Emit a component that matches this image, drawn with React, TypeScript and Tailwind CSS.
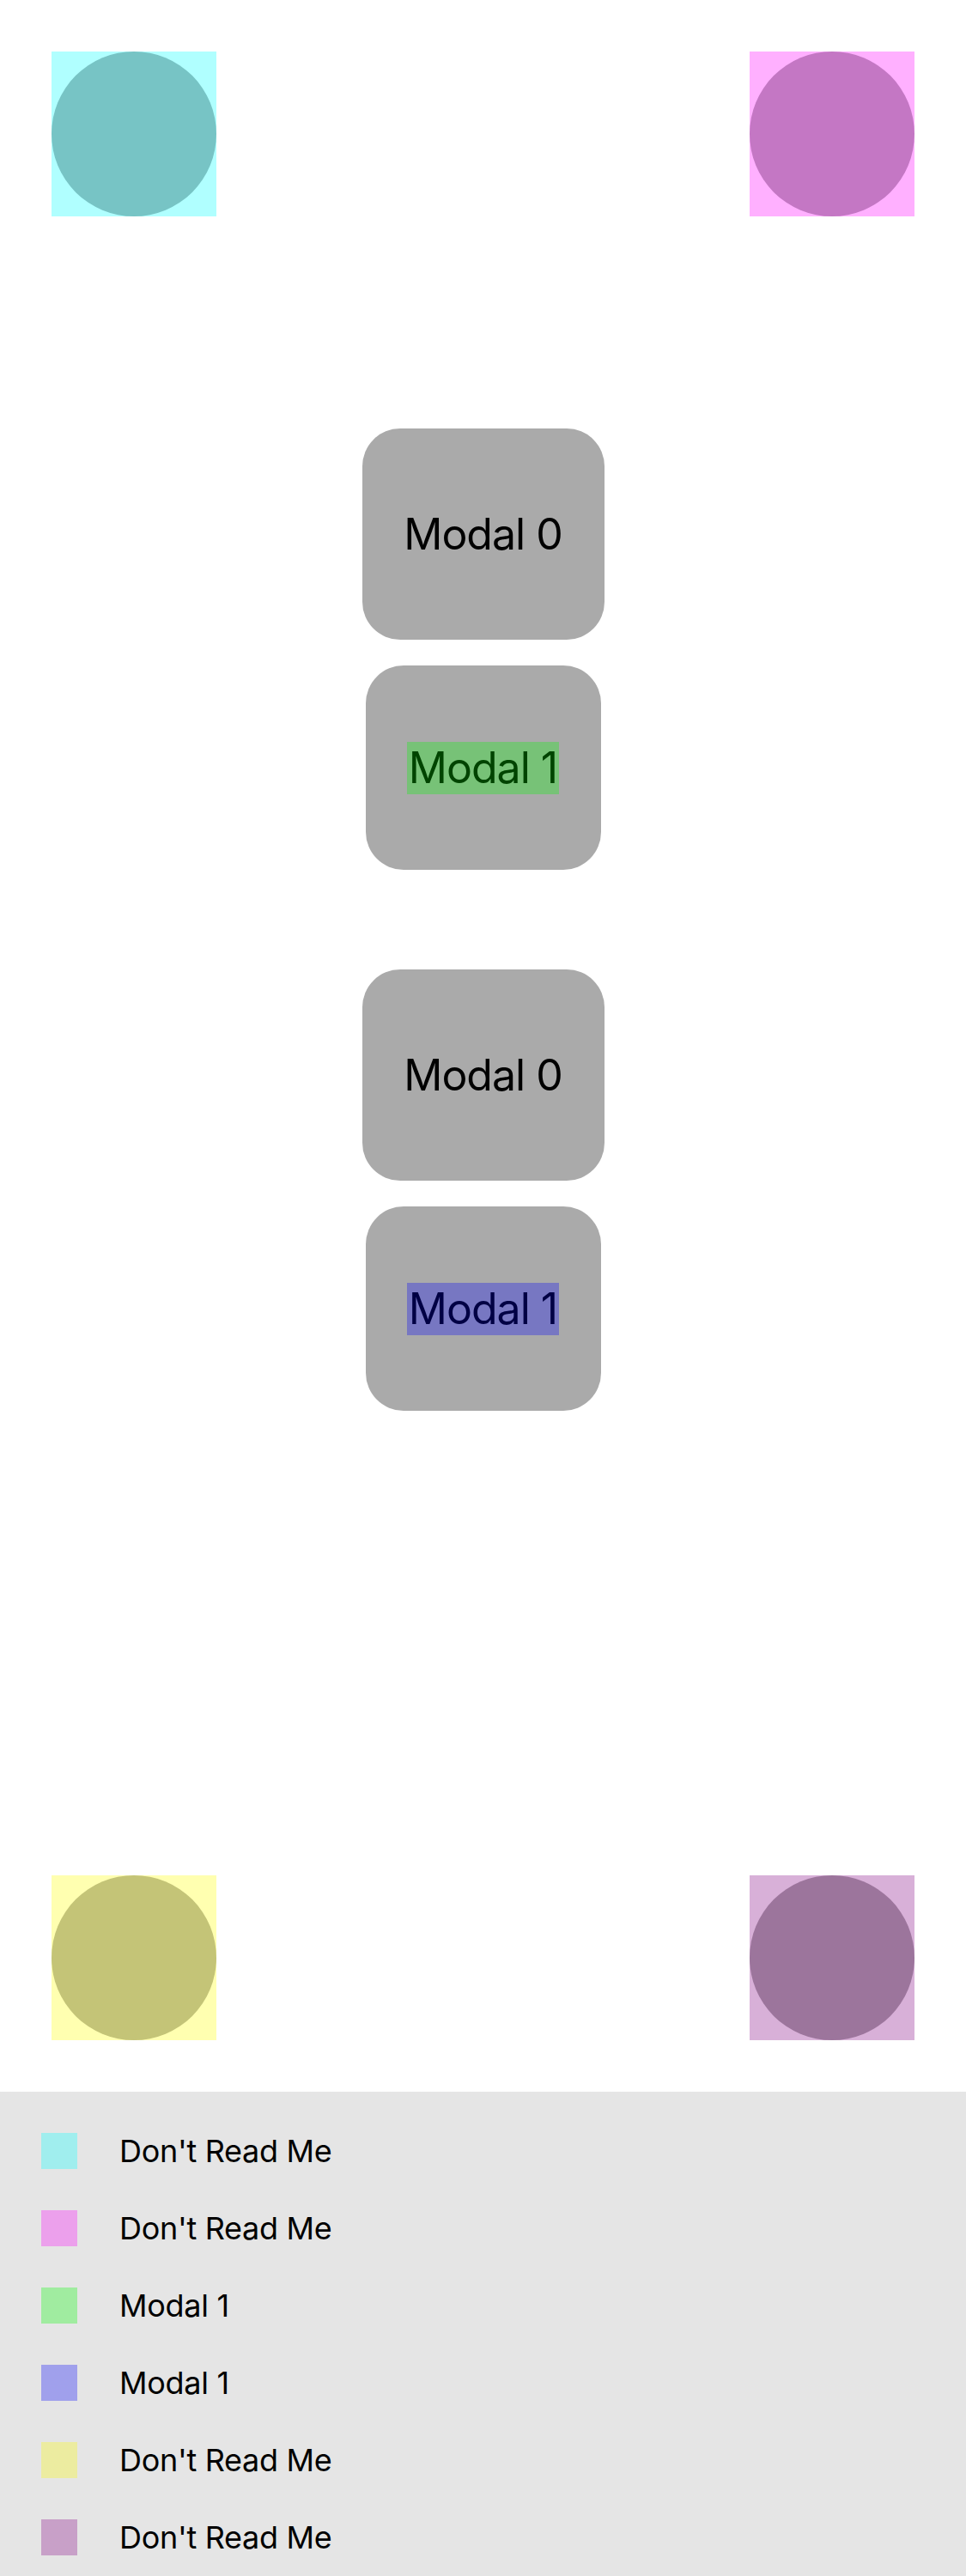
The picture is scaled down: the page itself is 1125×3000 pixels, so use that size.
import React from "react";

const legend = [
  { color: "bg-[#a0eeee]", label: "Don't Read Me" },
  { color: "bg-[#eca0ec]", label: "Don't Read Me" },
  { color: "bg-[#a0eca0]", label: "Modal 1" },
  { color: "bg-[#a0a0ec]", label: "Modal 1" },
  { color: "bg-[#ececa0]", label: "Don't Read Me" },
  { color: "bg-[#c8a0c8]", label: "Don't Read Me" },
];

function Corner({ sq, circ }: { sq: string; circ: string }) {
  return (
    <div className={`w-[192px] h-[192px] ${sq}`}>
      <div className={`w-full h-full rounded-full ${circ}`} />
    </div>
  );
}

function ModalPair({ hl }: { hl: string }) {
  return (
    <div className="flex flex-col items-center">
      <div className="w-[282px] h-[246px] rounded-[44px] bg-[#aaaaaa] flex items-center justify-center text-[50px] leading-[61px] tracking-[-1px] text-black">
        Modal 0
      </div>
      <div className="mt-[30px] w-[274px] h-[238px] rounded-[44px] bg-[#aaaaaa] flex items-center justify-center text-[50px] leading-[61px] tracking-[-1px]">
        <span className={hl}>Modal 1</span>
      </div>
    </div>
  );
}

export default function App() {
  return (
    <div className="w-full" style={{ fontFamily: "Inter, 'Noto Sans', sans-serif" }}>
      <div className="h-[2436px] bg-white flex flex-col px-[60px] pt-[60px] pb-[60px]">
        <div className="flex justify-between">
          <Corner sq="bg-[#b0ffff]" circ="bg-[#77c4c5]" />
          <Corner sq="bg-[#ffb0ff]" circ="bg-[#c477c4]" />
        </div>
        <div className="mt-[247px] flex flex-col items-center">
          <ModalPair hl="bg-[#77c277] text-[#004400] px-[2px]" />
          <div className="mt-[116px]">
            <ModalPair hl="bg-[#7777c2] text-[#000044] px-[2px]" />
          </div>
        </div>
        <div className="flex-1" />
        <div className="flex justify-between">
          <Corner sq="bg-[#ffffb0]" circ="bg-[#c4c477]" />
          <Corner sq="bg-[#d8b0d8]" circ="bg-[#9c759c]" />
        </div>
      </div>
      <div className="h-[564px] bg-[#e5e5e5] pt-[24px]">
        {legend.map((l, i) => (
          <div key={i} className="h-[90px] flex items-center pl-[48px]">
            <div className={`w-[42px] h-[42px] ${l.color}`} />
            <span className="ml-[49px] text-[36px] text-black tracking-[-0.3px]">{l.label}</span>
          </div>
        ))}
      </div>
    </div>
  );
}
